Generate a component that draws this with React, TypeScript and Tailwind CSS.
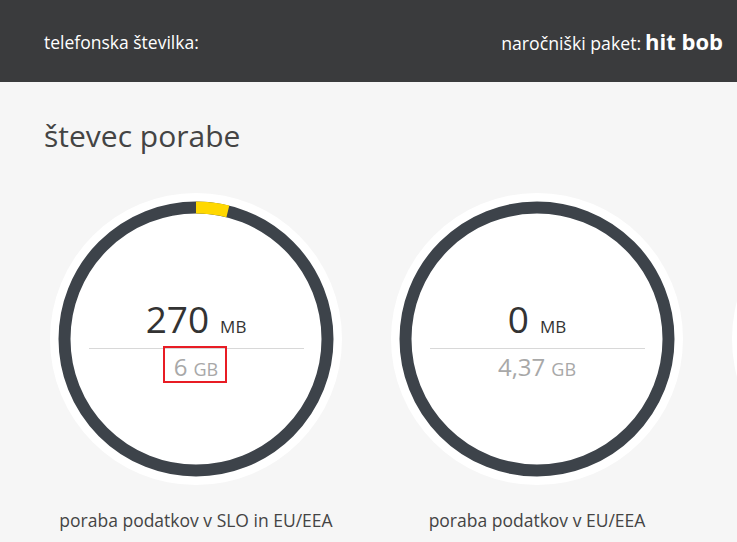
import React from "react";

type Gauge = {
  used: string;
  usedUnit: string;
  total: string;
  totalUnit: string;
  fraction: number;
  label: string;
  highlight?: boolean;
  empty?: boolean;
};

const gauges: Gauge[] = [
  { used: "270", usedUnit: "MB", total: "6", totalUnit: "GB", fraction: 0.039, label: "poraba podatkov v SLO in EU/EEA", highlight: true },
  { used: "0", usedUnit: "MB", total: "4,37", totalUnit: "GB", fraction: 0, label: "poraba podatkov v EU/EEA" },
  { used: "", usedUnit: "", total: "", totalUnit: "", fraction: 0, label: "", empty: true },
];

function Ring({ fraction }: { fraction: number }) {
  const r = 131.5;
  const c = 2 * Math.PI * r;
  return (
    <svg className="absolute left-0 top-0" width="292" height="292" viewBox="0 0 292 292">
      <circle cx="146" cy="146" r={r} fill="#ffffff" stroke="#3d434a" strokeWidth="12" />
      {fraction > 0 && (
        <circle
          cx="146"
          cy="146"
          r={r}
          fill="none"
          stroke="#ffd800"
          strokeWidth="12"
          strokeDasharray={`${c * fraction} ${c}`}
          transform="rotate(-90 146 146)"
        />
      )}
    </svg>
  );
}

function GaugeCard({ g }: { g: Gauge }) {
  return (
    <div className="flex w-[292px] shrink-0 flex-col items-center">
      <div className="relative flex h-[292px] w-[292px] flex-col items-center rounded-full bg-white">
        {!g.empty && (
          <>
            <Ring fraction={g.fraction} />
            <div className="relative mt-[107px] h-[38px] whitespace-nowrap text-[37px] leading-[38px] text-[#333333]">
              {g.used}
              <span className="ml-[11px] text-[17px] leading-none">{g.usedUnit}</span>
            </div>
            <div className="relative mt-[10px] h-px w-[215px] bg-[#d8d8d8]" />
            <div className="relative mt-[3px] h-[30px] whitespace-nowrap text-[24px] leading-[30px] text-[#a8a8a8]">
              {g.total}
              <span className="ml-[6px] text-[18px] leading-none">{g.totalUnit}</span>
              {g.highlight && (
                <div className="absolute -left-[11px] -right-[9px] -top-[6px] -bottom-[1px] border-2 border-[#e81c24]" />
              )}
            </div>
          </>
        )}
      </div>
      <div className="mt-[23px] h-[24px] whitespace-nowrap text-[17.5px] leading-[24px] text-[#444444]">{g.label}</div>
    </div>
  );
}

export default function App() {
  return (
    <div className="min-h-[542px] w-full overflow-hidden bg-[#f6f6f6]" style={{ fontFamily: "'Open Sans', sans-serif" }}>
      <header className="flex h-[82px] items-center justify-between bg-[#3a3b3d] pl-[44px] pr-[14px] pt-[2px] text-white">
        <div className="text-[17.5px] leading-[24px]">telefonska številka:</div>
        <div className="flex items-baseline text-[17.7px] leading-[24px]">
          <span>naročniški paket:</span>
          <span className="ml-[4px] text-[22px] font-bold">hit bob</span>
        </div>
      </header>
      <main>
        <h1 className="pl-[44px] pt-[34px] text-[30px] leading-[40px] font-normal text-[#444444]">števec porabe</h1>
        <div className="mt-[37px] flex gap-[49px] pl-[50px]">
          {gauges.map((g, i) => (
            <GaugeCard key={i} g={g} />
          ))}
        </div>
      </main>
    </div>
  );
}
